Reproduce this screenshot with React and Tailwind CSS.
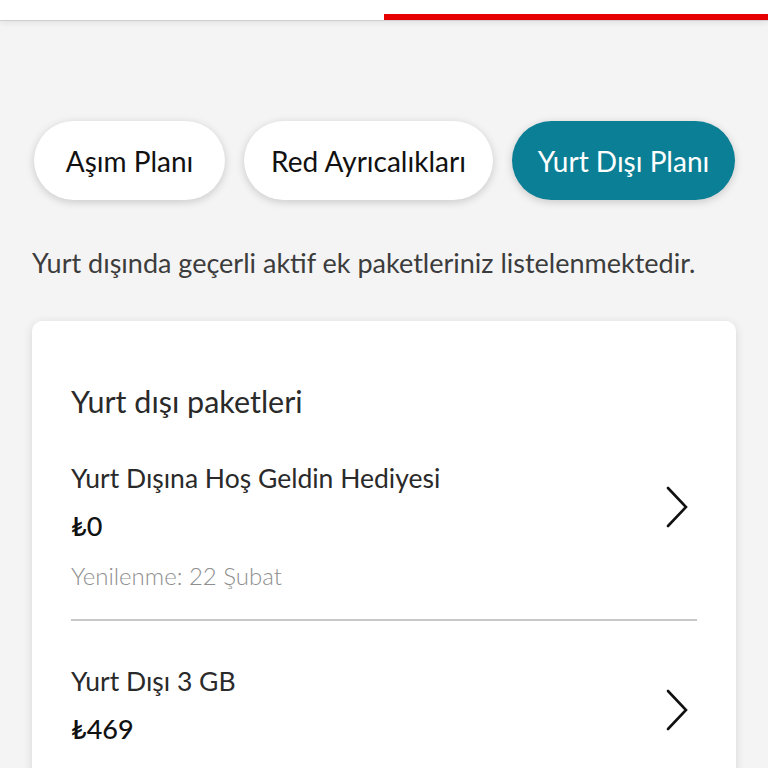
import React from "react";

function Chevron() {
  return (
    <svg width="24" height="42" viewBox="0 0 24 42" fill="none" className="shrink-0 mt-[10px]">
      <path d="M3 2 L21 21 L3 40" stroke="#111" strokeWidth="2.6" strokeLinecap="round" strokeLinejoin="miter" />
    </svg>
  );
}

function Item({ title, price }) {
  return (
    <div className="flex items-center justify-between pr-[8px]">
      <div className="flex flex-col">
        <div className="text-[26.5px] leading-[34px] text-[#2a2a2a]">{title}</div>
        <div className="text-[27px] leading-[34px] font-medium text-[#111] mt-[14px]">{price}</div>
      </div>
      <Chevron />
    </div>
  );
}

export default function App() {
  return (
    <div
      className="w-[768px] h-[768px] overflow-hidden bg-[#f4f4f4] relative"
      style={{ fontFamily: "Lato, 'Open Sans', sans-serif" }}
    >
      <div className="h-[21px] bg-white border-b border-[#cfcfcf] shadow-[0_2px_6px_rgba(0,0,0,0.08)] relative">
        <div className="absolute left-[384px] right-0 bottom-0 h-[6px] bg-[#e60000]" />
      </div>

      <div className="px-[32px]">
        <div className="flex gap-[19px] mt-[100px] pl-[2px]">
          <div className="h-[79px] w-[191px] justify-center flex items-center rounded-full bg-white shadow-[0_2px_8px_rgba(0,0,0,0.18)] text-[28px] text-[#111]">
            Aşım Planı
          </div>
          <div className="h-[79px] w-[249px] justify-center flex items-center rounded-full bg-white shadow-[0_2px_8px_rgba(0,0,0,0.18)] text-[28px] text-[#111]">
            Red Ayrıcalıkları
          </div>
          <div className="h-[79px] w-[223px] justify-center flex items-center rounded-full bg-[#0b7f95] shadow-[0_2px_8px_rgba(0,0,0,0.18)] text-[28px] text-white">
            Yurt Dışı Planı
          </div>
        </div>

        <div className="mt-[46px] text-[27px] leading-[34px] text-[#3c3c3c]">
          Yurt dışında geçerli aktif ek paketleriniz listelenmektedir.
        </div>

        <div className="mt-[41px] bg-white rounded-[10px] shadow-[0_2px_10px_rgba(0,0,0,0.12)] px-[39px] pt-[62px] pb-[40px]">
          <div className="text-[30.5px] leading-[36px] text-[#2a2a2a]">Yurt dışı paketleri</div>
          <div className="mt-[42px] pb-[28px] border-b-2 border-[#c8c8c8]">
            <Item title="Yurt Dışına Hoş Geldin Hediyesi" price="₺0" />
            <div className="text-[24px] leading-[30px] text-[#8f8f8f] font-light mt-[18px]">Yenilenme: 22 Şubat</div>
          </div>
          <div className="mt-[43px]">
            <Item title="Yurt Dışı 3 GB" price="₺469" />
          </div>
        </div>
      </div>
    </div>
  );
}
